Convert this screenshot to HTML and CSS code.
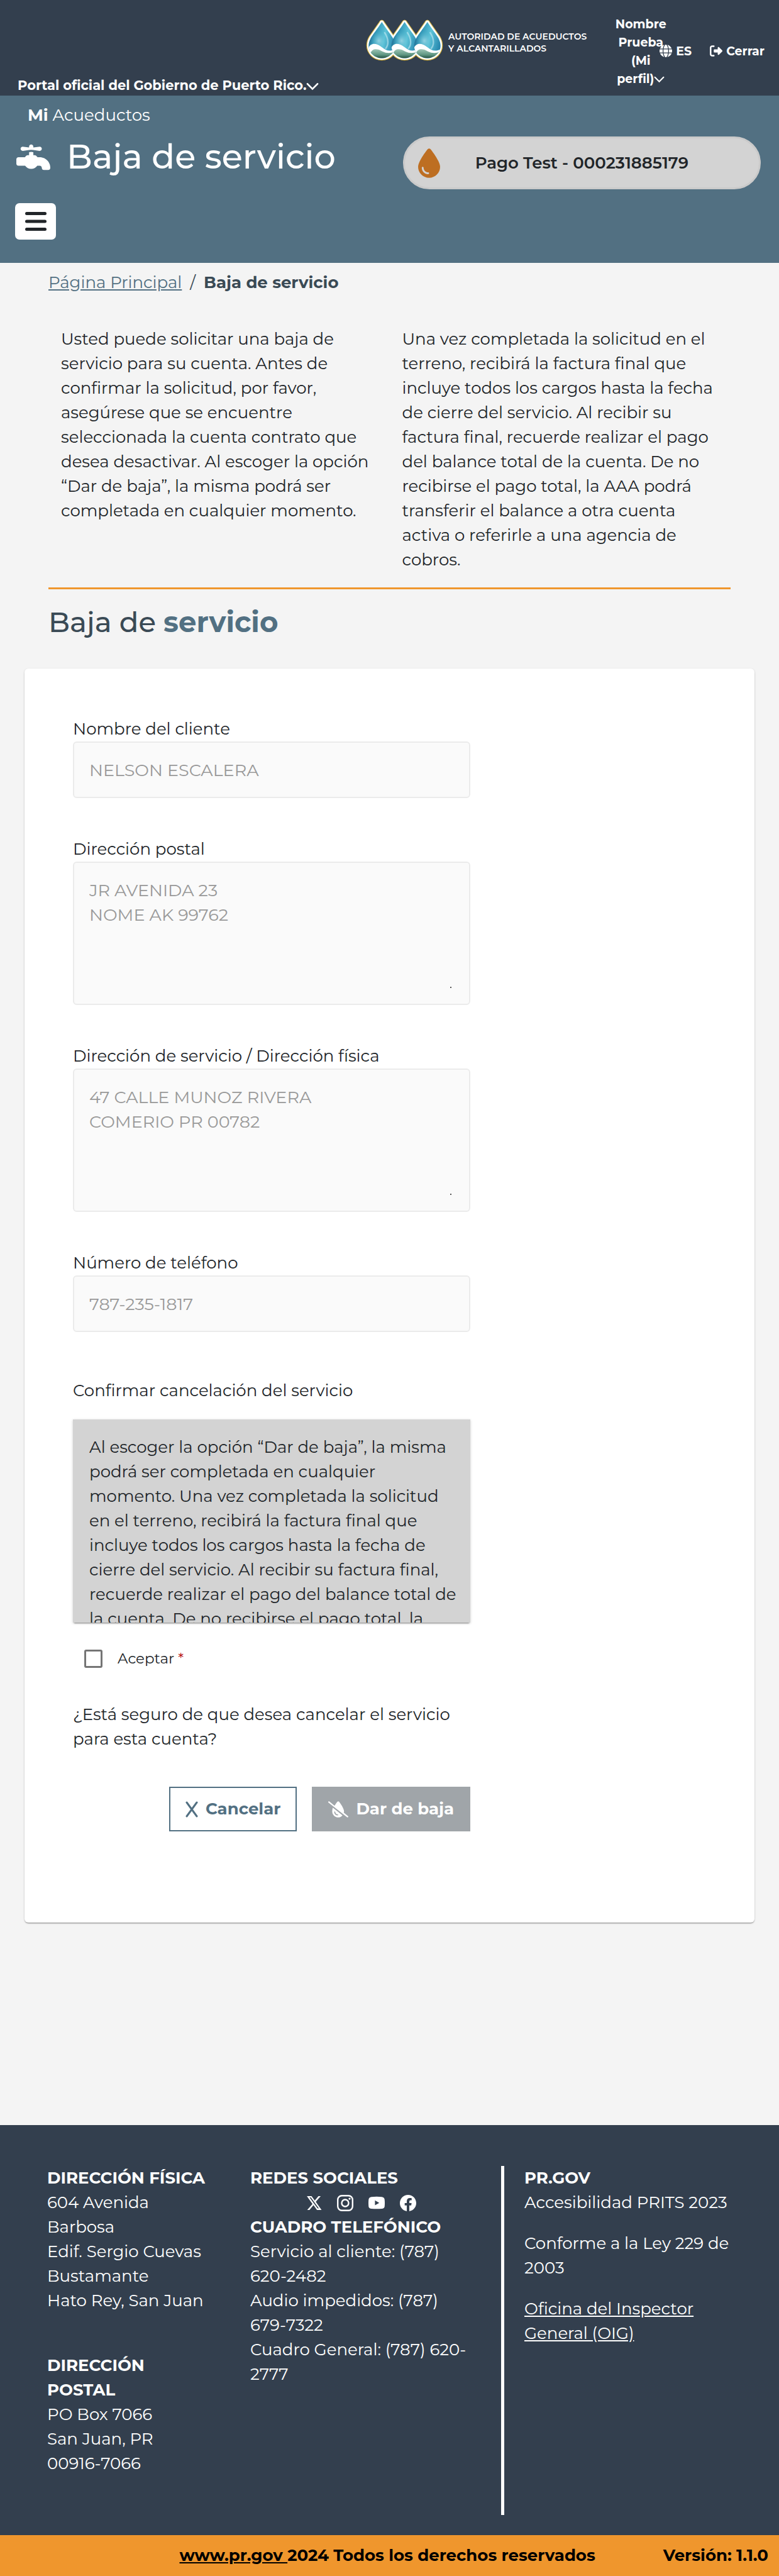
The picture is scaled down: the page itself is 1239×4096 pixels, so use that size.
FILE: index.html
```html
<!DOCTYPE html>
<html lang="es">
<head>
<meta charset="utf-8">
<meta name="viewport" content="width=device-width, initial-scale=1">
<title>Baja de servicio</title>
<link rel="stylesheet" href="styles.css">
</head>
<body>
<div class="topbar">
  <a class="portal" href="#">Portal oficial del Gobierno de Puerto Rico.<svg class="chevron" viewBox="0 0 16 16" aria-hidden="true"><path d="M1.500 5 8 11.500 14.500 5"/></svg></a>
  <a class="logo" href="#">
    <svg class="logo-drops" viewBox="0 0 152 82" aria-hidden="true">
      <defs>
        <linearGradient id="water" x1="0" y1="0" x2="1" y2="0.300"><stop offset="0" stop-color="#123c66"/><stop offset="0.350" stop-color="#2f93b4"/><stop offset="0.650" stop-color="#5cc3d8"/><stop offset="1" stop-color="#2787ae"/></linearGradient>
        <radialGradient id="glow"><stop offset="0" stop-color="#a5dbe8" stop-opacity="0.800"/><stop offset="1" stop-color="#4db9d0" stop-opacity="0"/></radialGradient>
        <linearGradient id="land" x1="0" y1="0" x2="0" y2="1"><stop offset="0" stop-color="#9cc4b5"/><stop offset="0.600" stop-color="#5f9682"/><stop offset="1" stop-color="#1c4a3c"/></linearGradient>
        <path id="drop" d="M31 2C28.500 2 28 3.500 26.500 6L7 34C3.500 40 2 45 2 51C2 67 15 79.500 31 79.500S60 67 60 51C60 45 58.500 40 55 34L35.500 6C34 3.500 33.500 2 31 2Z"/>
        <clipPath id="dropclip"><path d="M31 5C22 19 13 30 9 37C-3 60 14 76.500 31 76.500S65 60 53 37C49 30 40 19 31 5Z"/></clipPath>
        <g id="drop-inside" clip-path="url(#dropclip)">
          <rect width="62" height="82" fill="url(#water)"/>
          <ellipse cx="25" cy="42" rx="17" ry="20" fill="url(#glow)"/>
          <path d="M36 25C46 40 44 52 38 58" fill="none" stroke="#c5e9f1" stroke-width="3" opacity="0.600"/>
          <path d="M4 58C8 45 20 46 30 54C40 62 47 64 58 58V82H4Z" fill="#fff"/>
          <path d="M9 66C12 57 22 57 32 63C40 67 48 67 55 64C52 74 42 77 31 77S10 74 9 66Z" fill="url(#land)"/>
        </g>
      </defs>
      <g fill="#fff" stroke="#d8b440" stroke-width="3"><use href="#drop"/><use href="#drop" x="45"/><use href="#drop" x="90"/></g>
      <g fill="#fff"><use href="#drop"/><use href="#drop" x="45"/><use href="#drop" x="90"/></g>
      <use href="#drop-inside"/><use href="#drop-inside" x="45"/><use href="#drop-inside" x="90"/>
    </svg>
    <span class="logo-text">AUTORIDAD DE ACUEDUCTOS<br>Y ALCANTARILLADOS</span>
  </a>
  <a class="profile" href="#">Nombre Prueba (Mi perfil)<svg class="chevron" viewBox="0 0 16 16" aria-hidden="true"><path d="M1.500 5 8 11.500 14.500 5"/></svg></a>
  <a class="top-link language" href="#"><svg viewBox="0 0 512 512" aria-hidden="true"><path d="M352 256c0 22.200-1.200 43.600-3.300 64H163.300c-2.200-20.400-3.300-41.800-3.300-64s1.200-43.600 3.300-64H348.700c2.200 20.400 3.300 41.800 3.300 64zm28.800-64H503.900c5.300 20.500 8.100 41.900 8.100 64s-2.800 43.500-8.100 64H380.800c2.100-20.600 3.200-42 3.200-64s-1.100-43.400-3.200-64zm112.600-32H376.700c-10-63.900-29.800-117.400-55.300-151.600c78.300 20.700 142 77.500 171.900 151.600zm-149.100 0H167.700c6.100-36.400 15.500-68.600 27-94.700c10.500-23.600 22.200-40.700 33.500-51.500C239.400 3.200 248.700 0 256 0s16.600 3.200 27.800 13.800c11.300 10.800 23 27.900 33.500 51.500c11.600 26 20.900 58.200 27 94.700zm-209 0H18.600C48.600 85.900 112.200 29.100 190.600 8.400C165.100 42.600 145.300 96.100 135.300 160zM8.100 192H131.200c-2.100 20.600-3.200 42-3.200 64s1.100 43.400 3.200 64H8.100C2.800 299.500 0 278.100 0 256s2.800-43.500 8.100-64zM194.700 446.600c-11.600-26-20.900-58.200-27-94.600H344.300c-6.100 36.400-15.500 68.600-27 94.600c-10.500 23.600-22.200 40.700-33.500 51.500C272.600 508.800 263.300 512 256 512s-16.600-3.200-27.800-13.800c-11.300-10.800-23-27.900-33.500-51.500zM135.300 352c10 63.900 29.800 117.400 55.300 151.600C112.200 482.900 48.600 426.100 18.600 352H135.300zm358.100 0c-30 74.100-93.600 130.900-171.900 151.600c25.500-34.200 45.200-87.700 55.300-151.600H493.400z"/></svg>ES</a>
  <a class="top-link logout" href="#"><svg viewBox="0 0 512 512" aria-hidden="true"><path d="M377.900 105.900L500.700 228.700c7.200 7.200 11.300 17.100 11.300 27.300s-4.100 20.100-11.300 27.300L377.900 406.100c-6.400 6.400-15 9.900-24 9.900c-18.700 0-33.900-15.200-33.900-33.900l0-62.100-128 0c-17.700 0-32-14.300-32-32l0-64c0-17.700 14.300-32 32-32l128 0 0-62.100c0-18.700 15.200-33.900 33.900-33.900c9 0 17.600 3.600 24 9.900zM160 96L96 96c-17.700 0-32 14.300-32 32l0 256c0 17.700 14.300 32 32 32l64 0c17.700 0 32 14.300 32 32s-14.300 32-32 32l-64 0c-53 0-96-43-96-96L0 128C0 75 43 32 96 32l64 0c17.700 0 32 14.300 32 32s-14.300 32-32 32z"/></svg>Cerrar</a>
</div>

<header class="header">
  <p class="brand"><strong>Mi</strong> Acueductos</p>
  <h1 class="header-title"><svg viewBox="0 0 512 512" aria-hidden="true"><path d="M192 96v12L96 96c-17.700 0-32 14.300-32 32s14.300 32 32 32l96-12 31-3.900 1-.1 1 .1 31 3.900 96 12c17.700 0 32-14.300 32-32s-14.300-32-32-32l-96 12V96c0-17.700-14.300-32-32-32s-32 14.300-32 32zM32 256c-17.700 0-32 14.300-32 32v64c0 17.700 14.300 32 32 32h100.100c20.200 29 53.900 48 91.900 48s71.700-19 91.900-48H352c17.700 0 32 14.300 32 32s14.300 32 32 32h64c17.700 0 32-14.300 32-32c0-88.400-71.600-160-160-160h-32l-22.600-22.600c-6-6-14.100-9.400-22.600-9.400H256v-43.800l-32-4-32 4V224h-18.700c-8.500 0-16.600 3.400-22.600 9.400L128 256H32z"/></svg>Baja de servicio</h1>
  <button class="account" type="button"><svg viewBox="0 0 384 512" aria-hidden="true"><path d="M192 512C86 512 0 426 0 320C0 228.800 130.200 57.700 166.600 11.700C172.600 4.200 181.500 0 191.100 0h1.800c9.600 0 18.500 4.200 24.500 11.700C253.800 57.700 384 228.800 384 320c0 106-86 192-192 192zM96 336c0-8.800-7.200-16-16-16s-16 7.200-16 16c0 61.900 50.100 112 112 112c8.800 0 16-7.200 16-16s-7.200-16-16-16c-44.200 0-80-35.800-80-80z"/></svg><span>Pago Test - 000231885179</span></button>
  <button class="menu" type="button" aria-label="Menú"><svg viewBox="0 0 34 30" aria-hidden="true"><path d="M2.500 2.500h29M2.500 15h29M2.500 27.500h29"/></svg></button>
</header>

<main>
  <div class="intro">
    <nav class="breadcrumb" aria-label="Ruta"><a href="#">Página Principal</a><span>/</span><strong>Baja de servicio</strong></nav>
    <div class="notes">
      <p>Usted puede solicitar una baja de servicio para su cuenta. Antes de confirmar la solicitud, por favor, asegúrese que se encuentre seleccionada la cuenta contrato que desea desactivar. Al escoger la opción “Dar de baja”, la misma podrá ser completada en cualquier momento.</p>
      <p>Una vez completada la solicitud en el terreno, recibirá la factura final que incluye todos los cargos hasta la fecha de cierre del servicio. Al recibir su factura final, recuerde realizar el pago del balance total de la cuenta. De no recibirse el pago total, la AAA podrá transferir el balance a otra cuenta activa o referirle a una agencia de cobros.</p>
    </div>
    <h2 class="section-title">Baja de <strong>servicio</strong></h2>
  </div>

  <form class="card">
    <div class="form-column">
      <div class="field">
        <label for="nombre">Nombre del cliente</label>
        <div class="control"><input id="nombre" type="text" value="NELSON ESCALERA" disabled></div>
      </div>
      <div class="field">
        <label for="postal">Dirección postal</label>
        <div class="control multi"><textarea id="postal" disabled>JR AVENIDA 23
NOME AK 99762</textarea></div>
      </div>
      <div class="field">
        <label for="fisica">Dirección de servicio / Dirección física</label>
        <div class="control multi"><textarea id="fisica" disabled>47 CALLE MUNOZ RIVERA
COMERIO PR 00782</textarea></div>
      </div>
      <div class="field">
        <label for="telefono">Número de teléfono</label>
        <div class="control"><input id="telefono" type="tel" value="787-235-1817" disabled></div>
      </div>
      <p class="confirm-title">Confirmar cancelación del servicio</p>
      <div class="terms" tabindex="0">Al escoger la opción “Dar de baja”, la misma podrá ser completada en cualquier momento. Una vez completada la solicitud en el terreno, recibirá la factura final que incluye todos los cargos hasta la fecha de cierre del servicio. Al recibir su factura final, recuerde realizar el pago del balance total de la cuenta. De no recibirse el pago total, la</div>
      <label class="accept"><input type="checkbox"><span>Aceptar <b>*</b></span></label>
      <p class="question">¿Está seguro de que desea cancelar el servicio para esta cuenta?</p>
      <div class="actions">
        <button class="button cancel" type="button"><svg viewBox="0 0 20 26" aria-hidden="true"><path d="M2 2 18 24M18 2 2 24"/></svg>Cancelar</button>
        <button class="button submit" type="submit" disabled><svg viewBox="0 0 640 512" aria-hidden="true"><path d="M38.800 5.100C28.400-3.100 13.300-1.200 5.100 9.200S-1.200 34.700 9.200 42.900l592 464c10.400 8.200 25.500 6.300 33.700-4.100s6.300-25.500-4.100-33.700L495.500 363c5.500-14 8.500-28.600 8.500-43C504 229 382 58 346 12c-6-8-15-12-25-12h-2c-10 0-19 4-25 12-17 22-56 73-93 131zM453.600 443.900 147 202C135 240 128 280 128 320c0 106 86 192 192 192 52.100 0 99-20.100 133.600-68.100zM208 320c9 0 16 7 16 16 0 44 36 80 80 80 9 0 16 7 16 16s-7 16-16 16c-62 0-112-50-112-112 0-9 7-16 16-16z" fill-rule="evenodd"/></svg>Dar de baja</button>
      </div>
    </div>
  </form>
</main>

<footer class="footer">
  <div class="footer-columns">
    <div class="footer-address">
      <address><h3>DIRECCIÓN FÍSICA</h3>604 Avenida Barbosa<br>Edif. Sergio Cuevas Bustamante<br>Hato Rey, San Juan</address>
      <address><h3>DIRECCIÓN POSTAL</h3>PO Box 7066<br>San Juan, PR 00916-7066</address>
    </div>
    <div class="footer-contact">
      <h3>REDES SOCIALES</h3>
      <div class="social">
        <a href="#" aria-label="X"><svg viewBox="0 0 16 16"><path d="M12.600 1.250h2.200L10 6.750l5.650 8H11.200L7.750 10l-3.950 4.750H1.600L6.750 8.850 1.300 1.250h4.550L9 5.600ZM11.800 13.300H13L5.150 2.500H3.850Z" fill-rule="evenodd"/></svg></a>
        <a href="#" aria-label="Instagram"><svg viewBox="0 0 16 16"><g fill="none" stroke="currentColor" stroke-width="1.450"><rect x="0.750" y="0.750" width="14.500" height="14.500" rx="4"/><circle cx="8" cy="8" r="3.400"/></g><circle cx="12.300" cy="3.700" r="1"/></svg></a>
        <a href="#" aria-label="YouTube"><svg viewBox="0 0 16 16"><path d="M3 2Q8 1.500 13 2Q15.500 2.300 15.800 4.500Q16.200 8 15.800 11.500Q15.500 13.400 13 13.500Q8 13.800 3 13.500Q.5 13.400.2 11.500Q-.2 8 .2 4.500Q.5 2.300 3 2ZM6.400 5.400v4.800l4.200-2.400Z" fill-rule="evenodd"/></svg></a>
        <a href="#" aria-label="Facebook"><svg viewBox="0 0 16 16"><path d="M16 8.050C16 3.600 12.420 0 8 0S0 3.600 0 8.050c0 4.020 2.920 7.350 6.750 7.950v-5.620H4.720V8.050h2.030V6.280c0-2.020 1.200-3.130 3.020-3.130.88 0 1.790.16 1.790.16v1.980h-1.010c-1 0-1.310.62-1.310 1.260v1.500h2.220l-.35 2.330H9.240V16C13.070 15.400 16 12.070 16 8.050Z"/></svg></a>
      </div>
      <h3>CUADRO TELEFÓNICO</h3>
      <p>Servicio al cliente: (787) 620-2482</p>
      <p>Audio impedidos: (787) 679-7322</p>
      <p>Cuadro General: (787) 620-2777</p>
    </div>
    <div class="footer-gov">
      <h3>PR.GOV</h3>
      <p>Accesibilidad PRITS 2023</p>
      <p>Conforme a la Ley 229 de 2003</p>
      <a href="#">Oficina del Inspector General (OIG)</a>
    </div>
  </div>
  <div class="legal">
    <p><a href="#">www.pr.gov </a>2024 Todos los derechos reservados</p>
    <p class="version">Versión: 1.1.0</p>
  </div>
</footer>
</body>
</html>
```
FILE: styles.css
```css
* {
  box-sizing: border-box;
}

body {
  margin: 0;
  background: #f4f4f4;
  color: #212529;
  font: 400 26px/39px Montserrat, Inter, "Open Sans", sans-serif;
}

p,
h1,
h2,
h3 {
  margin: 0;
  font-size: inherit;
}

strong,
h3 {
  font-weight: 700;
}

a {
  color: inherit;
}

svg {
  display: block;
  flex: none;
  fill: currentColor;
}

button,
input,
textarea {
  margin: 0;
  padding: 0;
  border: 0;
  font: inherit;
  color: inherit;
}

/* Government bar */
.topbar {
  display: flex;
  align-items: center;
  min-height: 152px;
  padding: 12px 23px 2px 28px;
  background: #333f4e;
  color: #fff;
  font-size: 19px;
  font-weight: 700;
  line-height: 29px;
}

.topbar a {
  text-decoration: none;
}

.chevron {
  display: inline-block;
  width: 20px;
  height: 20px;
  vertical-align: -4px;
  fill: none;
  stroke: currentColor;
  stroke-width: 2;
  stroke-linecap: round;
}

.portal {
  align-self: flex-end;
  font-size: 21px;
}

.logo {
  display: flex;
  align-items: center;
  align-self: flex-start;
  gap: 8px;
  margin: 19px 45px 0 auto;
}

.logo-drops {
  width: 123px;
  height: 66px;
}

.logo-text {
  font-size: 14px;
  font-weight: 600;
  line-height: 19px;
  padding-top: 8px;
  white-space: nowrap;
}

.profile {
  align-self: flex-start;
  width: 82px;
  margin-top: 12px;
  text-align: center;
}

.profile .chevron {
  width: 17px;
}

.top-link {
  display: flex;
  align-items: center;
  gap: 6px;
}

.top-link svg {
  width: 20px;
  height: 20px;
}

.language {
  margin-left: -11px;
}

.logout {
  margin-left: 29px;
}

/* Page header */
.header {
  display: grid;
  grid-template-columns: 1fr 48%;
  align-items: start;
  padding: 12px 29px 37px 24px;
  background: #527082;
  color: #fff;
}

.brand {
  grid-column: 1 / 3;
  margin-bottom: 14px;
  padding-left: 20px;
}

.header-title {
  display: flex;
  align-items: center;
  gap: 26px;
  padding-left: 2px;
  font-size: 54px;
  font-weight: 500;
  line-height: 65px;
}

.header-title svg {
  width: 54px;
  height: 54px;
}

.account {
  display: grid;
  grid-template-columns: 35px 1fr 35px;
  align-items: center;
  height: 84px;
  padding: 0 21px;
  border: 3px solid #cacaca;
  border-radius: 42px;
  background: #d3d3d3;
  color: #212529;
  font-weight: 600;
}

.account svg {
  width: 35px;
  height: 47px;
  fill: #bd6e22;
}

.menu {
  display: grid;
  place-items: center;
  width: 65px;
  height: 58px;
  margin-top: 22px;
  border-radius: 7px;
  background: #fff;
  color: #212529;
}

.menu svg {
  width: 34px;
  height: 30px;
  stroke: currentColor;
  stroke-width: 5;
  stroke-linecap: round;
}

/* Introduction */
.intro {
  padding: 12px 77px 47px;
}

.breadcrumb {
  display: flex;
  gap: 13px;
  margin-bottom: 51px;
  color: #3a4a55;
}

.breadcrumb a {
  color: #527082;
}

.notes {
  display: grid;
  grid-template-columns: 1fr 1fr;
  padding-bottom: 24px;
  border-bottom: 3px solid #ef962d;
}

.notes p {
  padding: 0 20px;
}

.section-title {
  margin-top: 25px;
  color: #3a4a55;
  font-size: 45px;
  font-weight: 500;
  line-height: 54px;
}

.section-title strong {
  color: #527082;
}

/* Form card */
.card {
  margin: 0 39px 322px;
  padding: 77px;
  padding-bottom: 145px;
  border-radius: 6px;
  background: #fff;
  box-shadow: 0 2px 2px -1px #0005, 0 1px 3px #0003;
}

.form-column {
  max-width: 632px;
}

.field {
  margin-bottom: 62px;
}

.field label {
  display: block;
}

.control {
  position: relative;
  height: 90px;
  padding: 24px;
  border: 2px solid #ebebeb;
  border-radius: 6px;
  background: #fafafa;
  color: #999;
  font-size: 27px;
}

.control input,
.control textarea {
  display: block;
  width: 100%;
  height: 100%;
  background: none;
  resize: none;
}

.multi {
  height: 228px;
}

.multi::after {
  content: "";
  position: absolute;
  right: 28px;
  bottom: 25px;
  width: 2px;
  height: 2px;
  background: #555;
}

.confirm-title {
  margin: 74px 0 26px;
}

.terms {
  height: 323px;
  padding: 25px 20px 0 26px;
  overflow: hidden;
  background: #d3d3d3;
  box-shadow: 0 3px 2px -2px #0006, 0 1px 4px #0003;
}

.accept {
  display: flex;
  align-items: center;
  gap: 24px;
  margin: 38px 0 50px;
  padding-left: 18px;
  font-size: 23px;
}

.accept input {
  appearance: none;
  width: 29px;
  height: 29px;
  border: 3px solid #757575;
  border-radius: 3px;
}

.accept b {
  color: #b50909;
  font-weight: 400;
}

.actions {
  display: flex;
  justify-content: flex-end;
  gap: 24px;
  margin-top: 56px;
}

.button {
  display: flex;
  align-items: center;
  gap: 12px;
  height: 71px;
  padding: 0 24px;
  border: 2px solid #527082;
  background: #fff;
  color: #527082;
  font-weight: 700;
}

.cancel svg {
  width: 20px;
  height: 26px;
  stroke: currentColor;
  stroke-width: 3;
  stroke-linecap: round;
}

.submit {
  border-color: #a0a5a9;
  background: #a0a5a9;
  color: #fff;
}

.submit svg {
  width: 32px;
  height: 26px;
}

/* Footer */
.footer {
  background: #333f4e;
  color: #fff;
}

.footer-columns {
  display: grid;
  grid-template-columns: 323px 399px 1fr;
  padding: 65px 32px 32px 75px;
}

.footer address {
  font-style: normal;
}

.footer-address {
  padding: 0 64px 62px 0;
}

.footer-address address + address {
  margin-top: 64px;
}

.footer-contact {
  padding-right: 48px;
}

.social {
  display: flex;
  justify-content: center;
  align-items: center;
  gap: 24px;
  height: 39px;
}

.social svg {
  width: 26px;
  height: 26px;
}

.footer-gov {
  padding: 0 32px;
  border-left: 5px solid #fff;
}

.footer-gov p {
  margin-bottom: 26px;
}

.legal {
  display: flex;
  justify-content: flex-end;
  gap: 108px;
  padding: 13px 17px;
  background: #ef962d;
  color: #000;
  font-weight: 700;
}
```
